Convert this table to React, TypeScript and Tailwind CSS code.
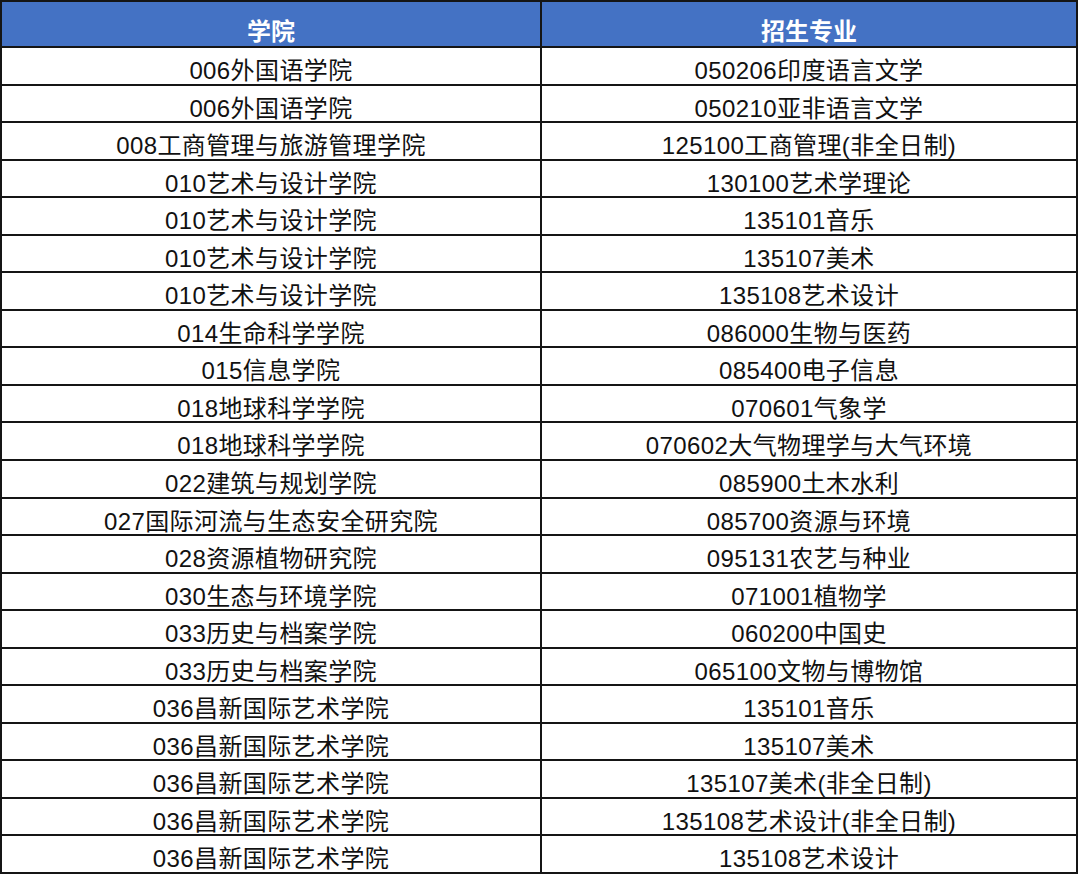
import React from "react";

const rows: [string, string][] = [
  ["006外国语学院", "050206印度语言文学"],
  ["006外国语学院", "050210亚非语言文学"],
  ["008工商管理与旅游管理学院", "125100工商管理(非全日制)"],
  ["010艺术与设计学院", "130100艺术学理论"],
  ["010艺术与设计学院", "135101音乐"],
  ["010艺术与设计学院", "135107美术"],
  ["010艺术与设计学院", "135108艺术设计"],
  ["014生命科学学院", "086000生物与医药"],
  ["015信息学院", "085400电子信息"],
  ["018地球科学学院", "070601气象学"],
  ["018地球科学学院", "070602大气物理学与大气环境"],
  ["022建筑与规划学院", "085900土木水利"],
  ["027国际河流与生态安全研究院", "085700资源与环境"],
  ["028资源植物研究院", "095131农艺与种业"],
  ["030生态与环境学院", "071001植物学"],
  ["033历史与档案学院", "060200中国史"],
  ["033历史与档案学院", "065100文物与博物馆"],
  ["036昌新国际艺术学院", "135101音乐"],
  ["036昌新国际艺术学院", "135107美术"],
  ["036昌新国际艺术学院", "135107美术(非全日制)"],
  ["036昌新国际艺术学院", "135108艺术设计(非全日制)"],
  ["036昌新国际艺术学院", "135108艺术设计"],
];

export default function App() {
  return (
    <div
      className="w-[1080px] h-[888px] bg-white"
      style={{ fontFamily: '"Liberation Sans", "Noto Sans CJK SC", sans-serif' }}
    >
      <div className="w-[1078px] border-l-2 border-t-2 border-[#151515]">
        <div className="grid grid-cols-[540px_536px] h-[46px]">
          <div className="bg-[#4472c4] border-r-2 border-b-2 border-[#151515] flex justify-center pt-[18px] text-white text-[24px] leading-none font-bold">
            学院
          </div>
          <div className="bg-[#4472c4] border-r-2 border-b-2 border-[#151515] flex justify-center pt-[18px] text-white text-[24px] leading-none font-bold">
            招生专业
          </div>
        </div>
        {rows.map(([a, b], i) => (
          <div key={i} className="grid grid-cols-[540px_536px] h-[37.55px]">
            <div className="border-r-2 border-b-2 border-[#151515] flex justify-center pt-[11px] text-[#111] text-[24px] tracking-[0.4px] leading-none whitespace-nowrap">
              {a}
            </div>
            <div className="border-r-2 border-b-2 border-[#151515] flex justify-center pt-[11px] text-[#111] text-[24px] tracking-[0.4px] leading-none whitespace-nowrap">
              {b}
            </div>
          </div>
        ))}
      </div>
    </div>
  );
}
